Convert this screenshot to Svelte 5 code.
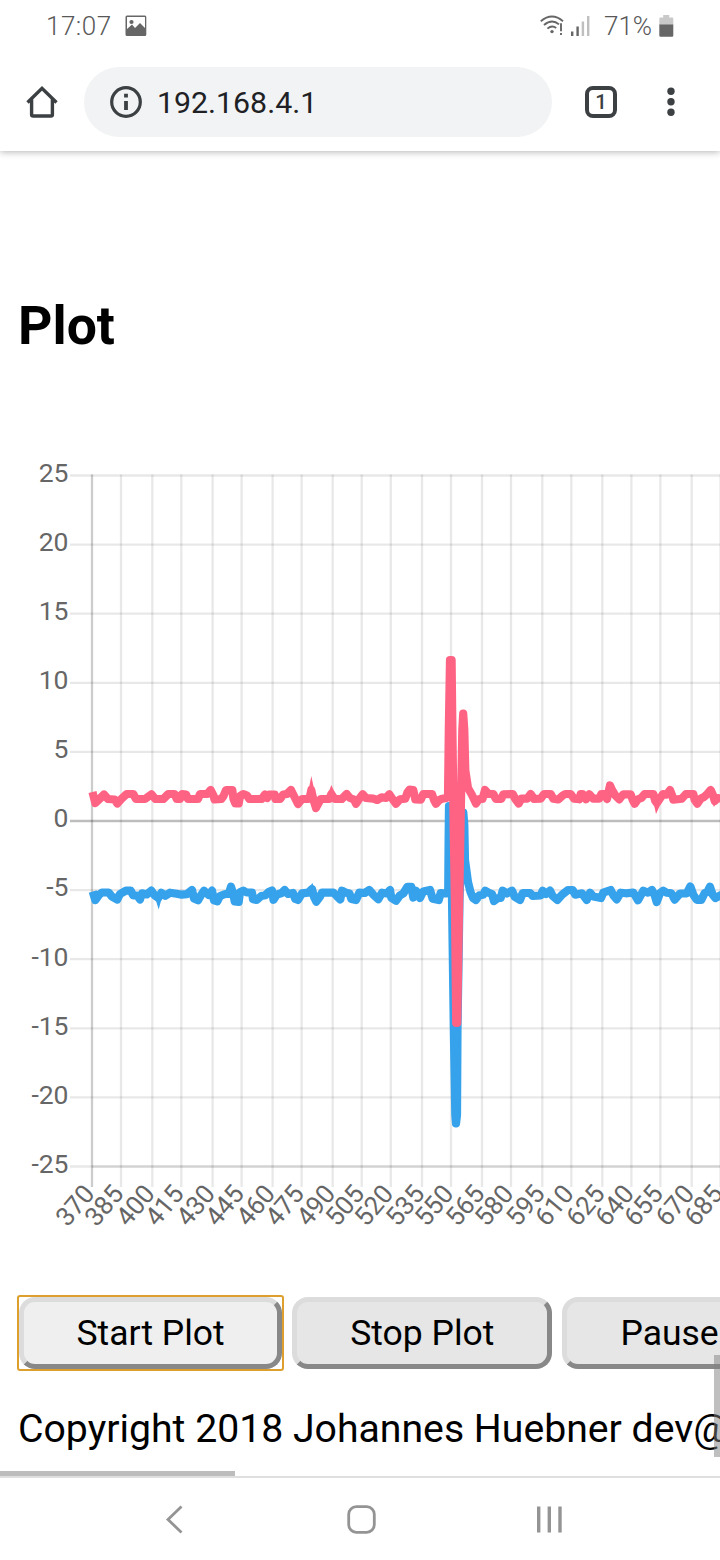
<!--
  App.svelte: phone browser showing the inverter's live plot page.
-->
<script lang="ts">
  type Tick = { label: number; pos: number };

  const yTicks: Tick[] = [25, 20, 15, 10, 5, 0, -5, -10, -15, -20, -25].map((label, i) => ({
    label,
    pos: 475.5 + i * 69.1,
  }));

  const columns = [
    92, 121, 152.3, 181.3, 212.6, 241.6, 272.6, 301.6, 332.7, 361.7, 390.8,
    422, 451, 482, 511, 542.3, 571.3, 602.3, 631.4, 660.4, 691.7, 720.5,
  ];
  const xTicks: Tick[] = columns.map((pos, i) => ({ label: 370 + i * 15, pos }));

  const redTrace = `
    92.5,792 95.3,803 99.5,799 104,794.5 108,799 114.7,799.5 117.3,803.5 121.3,799 126.7,794 133.3,794
    136,799 145,799 151.5,794.3 155.3,799 163.3,799 168.3,794 174.7,794 176.7,799 180,799 182,794
    186,794.5 188,799 198,799 200,794 207.3,794 210.7,790 213.5,795.5 214.5,799.5 221.3,799 223.5,796
    226,790 232.3,790 233.5,799 235.3,803.5 238.7,803.5 240,796 243.3,794 247,795.5 249.3,799 261.7,799
    265,794.5 267.3,798 268.7,794.5 274.7,794.5 275.5,799 280,799 283.3,794.5 287,794 291,790 294,796
    298,804 302,799 308.7,799 310,796 311.3,790 313,798 316,808 318.7,802.7 320.7,799 329.3,799
    331.3,794 334.7,799 341.7,799 346.7,794 350,798 354,799.5 356,803.7 359.3,798.7 362.7,794.3 366,798
    373.3,798.7 377.3,800 381.7,797.3 386,798 389.3,794.3 392.7,799.3 396,803.7 400,799.3 405.3,798.7
    407.3,792.7 409.5,789.7 413.3,790 415.3,799.5 420.7,799.7 423.3,794 432,794 434,800 436,803.7
    439.3,800 442,798.7 446.5,798 448,796 448.8,730 450,660 451.6,660 452.3,720 453.7,830 454.9,900
    456.2,1023 457.2,1023 459.2,900 461.2,790 462.3,730 463.2,713.5 464.3,730 465.3,770 468,788 472,795
    476,803.5 479,799 482.5,799 485,790 488.7,794 493.3,794 496,799 501.3,799 503.3,794.3 512.7,794
    515.3,799 518.7,803.5 521.3,798.7 527.3,798.7 530.7,794 534,799 540.7,798.7 544,794 550.7,794
    553.3,798.7 558.3,799.5 562.7,795.5 565.3,794 570.7,794 574,798.7 579.3,799.3 580.7,794 582.7,794
    586,799.3 589.3,794.3 593.3,798.7 599.3,798.7 601.3,794 605.3,794 607,799 609,790 610,785.5 612,790
    615.3,795.3 619.3,799.3 623.3,794.3 630.7,794.3 632.7,800 634.7,803.7 638,799.3 641.3,798
    644.7,794 653.3,794 655.3,801 656.7,803 659.3,799.5 663,794 666.7,794.7 670,790 672,795
    673.3,799.7 681.7,798.7 686,794 693.3,794 694.7,800 697.3,803.7 700.7,798.7 704,797 707.3,794
    710.7,790 713.3,796 714.7,801 717.3,798 724,799`;

  const blueTrace = `
    92.7,891.5 95.3,900 99.3,894.5 102,892.5 108.7,892.5 112,896.7 117.3,899.5 120,894 126,890.7
    130.7,890.7 133.3,895.5 137.3,895.5 140,899.5 142,893.3 146.7,894.5 151.3,890.7 154.7,895.5 158.3,898
    161.3,892.7 165.3,895.7 170,892.7 176.7,893.7 181.7,894.7 186.7,894.2 192,890 194,898.5 198,900.3
    201.3,894.7 204,890.7 208.7,895 212,890.7 214,900.3 217.3,901.3 220,896 225.3,894 228.7,894
    231,886.7 233.3,894 234.7,901.5 238.7,902 240,892.3 243.3,890.7 246.7,892.5 252,892.5 253,899.3
    256.7,900 261.3,896 265.3,895.3 268.7,892 272,890.5 273.5,899.8 276.7,894.7 281.7,893 284.7,890
    288,894 293,893 295.3,899 298,900 302,893.3 308,892.7 312,889 314,897 316.3,901.7 320,896.5
    322,892.7 333.3,892.5 336.7,896 340.3,899.5 342,890.7 346,892.7 349.5,893.5 351.3,899 356,900
    359.3,892.7 364.7,893 369.3,890 373.3,894.7 378.3,899.2 382,892.7 386.7,893.5 390,890 391.3,897.7
    396,900.7 400,895.3 403.3,893.5 407.3,886.9 411.3,886.9 413.3,897.5 416,890.7 420,898 423.3,891.5
    430,890 432.7,898.7 438.7,900 440.7,893 446,893.5 448.2,892 448.6,840 449,806 450.5,820 452,900
    453.8,1028 455.3,1115 456,1123.5 457,1115 457.5,1028 459.5,900 462,825 463.3,812.5 464.3,825
    465,860 468,882 470.5,892 473,898 476,900 479.3,895.3 483.3,894.7 485.3,890.7 489.3,893 492,894
    494,901 498,898 500.7,898 502.7,890.7 507,893.5 512,890.7 514.7,896.7 520,900 522.7,893 530,893
    532.7,896 540.7,895.5 542.7,890.7 546,894 550,890.7 552.7,896 557.3,900 562,894.7 568,890
    572.7,890 575.3,894.7 582,893.3 586.7,900 590,892.7 593.3,896.5 601,898 603.3,892.7 610.7,890
    613.3,895.3 616.7,899.3 620.7,892.7 626,893.3 633.3,892.5 638,900.3 643.3,890.7 648,892.7 652,890
    654.7,895.3 656.7,902 660,893 663.3,890.7 666.7,892.7 671.3,893.3 674.7,899.7 680,893.5 686.7,893.3
    690.3,886.5 693.3,894.7 696.7,899.8 701.3,899.8 704.7,893 707.3,892 710,886.7 712.7,894.7
    715.3,898 724,893.5`;
</script>

<div class="phone">
  <header class="chrome">
    <div class="status">
      <span class="clock">17:07</span>
      <svg class="photo" width="22" height="22" viewBox="0 0 22 22">
        <path fill-rule="evenodd" fill="#666" d="M2 .5h18q1.300 0 1.300 1.500v17.500q0 1.500-1.300 1.500H2q-1.500 0-1.500-1.500V2Q.5.5 2 .5ZM2 2v12l5-4.500 3 3.500 5-5 5 5V2Z" />
        <circle cx="6.500" cy="7" r="2.100" fill="#666" />
      </svg>
      <svg class="wifi" width="24" height="22" viewBox="0 0 24 22">
        <g fill="none" stroke="#666" stroke-width="1.900">
          <path d="M.8 6.200Q12 -3.200 23 6.200" />
          <path d="M4 10Q12 3.300 19 9.400" />
          <path d="M7.400 13.600Q12 9.700 16.200 13" />
          <path d="M21 8.300v8M21 17.900v2.200" />
        </g>
        <circle cx="12" cy="16.600" r="1.700" fill="#666" />
      </svg>
      <svg class="signal" width="19" height="22" viewBox="0 0 19 22">
        <path d="M1.200 21v-4.500M6.600 21V11.500" stroke="#666" stroke-width="2.400" />
        <path d="M11.900 21V6.500M17.200 21V1" stroke="#bfbfbf" stroke-width="2.400" />
      </svg>
      <span class="percent">71%</span>
      <svg class="battery" width="15" height="22" viewBox="0 0 15 22">
        <path d="M4.200 0h6v2.500H13q1.300 0 1.300 1.300V10H.3V3.800q0-1.300 1.300-1.300h2.600Z" fill="#c9c9c9" />
        <path d="M.3 9.500h14v11q0 1.200-1.300 1.200H1.600q-1.300 0-1.300-1.200Z" fill="#666" />
      </svg>
    </div>

    <div class="toolbar">
      <svg class="home" width="32" height="32" viewBox="0 0 32 32" fill="none" stroke="#3c4043" stroke-width="3.400">
        <path d="M1.500 16.500 16 2.400 30.500 16.500M5.600 13.500V28.500q0 1.500 1.500 1.500h17.800q1.500 0 1.500-1.500V13.500" />
      </svg>
      <div class="address">
        <svg width="32" height="32" viewBox="0 0 32 32">
          <circle cx="16" cy="16" r="14.300" fill="none" stroke="#3c4043" stroke-width="3.200" />
          <path d="M16 7.800v3.700M16 15v9" stroke="#3c4043" stroke-width="3.800" />
        </svg>
        <span class="url">192.168.4.1</span>
      </div>
      <div class="tabs">1</div>
      <svg class="menu" width="8" height="30" viewBox="0 0 8 30" fill="#3c4043">
        <circle cx="4" cy="4.200" r="3.700" />
        <circle cx="4" cy="14.700" r="3.700" />
        <circle cx="4" cy="25.200" r="3.700" />
      </svg>
    </div>
  </header>

  <main class="page">
    <h1>Plot</h1>

    <svg class="chart" width="720" height="800" viewBox="0 450 720 800">
      <g class="grid">
        {#each yTicks as tick}
          <line x1="70" x2="720" y1={tick.pos} y2={tick.pos} class:zero={tick.label === 0} />
        {/each}
        {#each xTicks as tick, i}
          <line x1={tick.pos} x2={tick.pos} y1="474.500" y2="1187" class:axis={i === 0} />
        {/each}
        <line x1="92" x2="720" y1="1166.500" y2="1166.500" />
      </g>

      <g class="trace blue">
        <polyline points={blueTrace} />
        <path d="M154.500 896 158.700 909.500 162.300 896ZM307.500 892 312.300 882.700 315.500 892Z" />
      </g>
      <g class="trace red">
        <polyline points={redTrace} />
        <path d="M307.800 794 311.300 776 315.200 794ZM328 794 331.300 785 335.500 794ZM652.500 798 656 814 662 801ZM711.500 799 713.800 807 719 800Z" />
      </g>

      <g class="labels">
        {#each yTicks as tick}
          <text x="68.500" y={tick.pos + 6.300}>{tick.label}</text>
        {/each}
        {#each xTicks as tick}
          <text class="slanted" transform="translate({tick.pos - 3} 1188.500) rotate(-50)">{tick.label}</text>
        {/each}
      </g>
    </svg>

    <div class="actions">
      <button class="focused">Start Plot</button>
      <button>Stop Plot</button>
      <button>Pause Plot</button>
    </div>

    <p class="copyright">Copyright 2018 Johannes Huebner dev@</p>

    <div class="scroll-y"></div>
    <div class="scroll-x"></div>
  </main>

  <nav class="navbar">
    <svg width="720" height="82" viewBox="0 0 720 82" fill="none" stroke="#949494" stroke-width="2.800">
      <path d="M181.500 28.500 168 41.500l13.500 13" />
      <rect x="348.700" y="28.700" width="25.600" height="25.600" rx="7.500" />
      <path d="M538.700 28.500v26M549.300 28.500v26M560 28.500v26" stroke-width="3.400" />
    </svg>
  </nav>
</div>

<style>
  :global(body) {
    margin: 0;
    background: #fff;
  }

  .phone {
    display: flex;
    flex-direction: column;
    width: 720px;
    height: 1560px;
    overflow: hidden;
    background: #fff;
    font-family: Roboto, sans-serif;
  }

  /* Status bar and browser toolbar */
  .chrome {
    height: 151px;
    flex-shrink: 0;
    box-shadow: 0 1px 7px rgba(0, 0, 0, 0.3);
    z-index: 1;
  }

  .status {
    display: flex;
    align-items: center;
    height: 52px;
    padding: 0 46px;
    box-sizing: border-box;
    color: #585858;
    font-size: 26px;
    font-weight: 300;
  }

  .clock { width: 79px; letter-spacing: 0.5px; }
  .wifi { margin-left: auto; }
  .signal { margin-left: 7px; }
  .percent { margin-left: 14px; width: 50px; }
  .battery { margin-left: 5px; }

  .toolbar {
    display: flex;
    align-items: center;
    height: 99px;
    padding-left: 26px;
  }

  .address {
    display: flex;
    align-items: center;
    gap: 15px;
    width: 468px;
    height: 70px;
    margin-left: 26px;
    padding-left: 26px;
    box-sizing: border-box;
    border-radius: 35px;
    background: #f1f3f4;
    color: #202124;
    font-size: 30.3px;
  }
  .url { padding-top: 2px; }

  .tabs {
    display: flex;
    align-items: center;
    justify-content: center;
    width: 32px;
    height: 32px;
    margin-left: 33px;
    box-sizing: border-box;
    border: 4px solid #3c4043;
    border-radius: 8px;
    color: #3c4043;
    font-size: 20.5px;
    font-weight: 500;
  }

  .menu { margin-left: 50px; }

  /* Web page */
  .page {
    position: relative;
    display: flex;
    flex-direction: column;
    height: 1325px;
    flex-shrink: 0;
    overflow: hidden;
    color: #000;
  }

  h1 {
    margin: 144px 0 0 18px;
    font-size: 53.5px;
    line-height: 62px;
    font-weight: 700;
  }

  .chart {
    display: block;
    flex-shrink: 0;
    margin-top: 93px;
  }

  .grid line {
    stroke: rgba(0, 0, 0, 0.09);
    stroke-width: 2.3px;
  }
  .grid line.zero { stroke: rgba(0, 0, 0, 0.26); }
  .grid line.axis { stroke: rgba(0, 0, 0, 0.2); }

  .trace polyline {
    fill: none;
    stroke-width: 8.2px;
    stroke-linejoin: round;
  }
  .blue polyline { stroke: #36a2eb; }
  .blue path { fill: #36a2eb; }
  .red polyline { stroke: #ff6384; }
  .red path { fill: #ff6384; }

  .labels text {
    fill: #666;
    font-size: 26.5px;
    text-anchor: end;
  }
  .labels .slanted {
    font-size: 26px;
    dominant-baseline: central;
  }

  .actions {
    display: flex;
    gap: 10px;
    margin: 47px 0 0 19px;
  }

  button {
    position: relative;
    flex-shrink: 0;
    height: 72px;
    padding: 0 53px;
    border: 5px solid;
    border-color: #dcdcdc #888 #888 #dcdcdc;
    border-radius: 16px;
    background: #e6e6e6;
    color: #000;
    font-family: inherit;
    font-size: 35.5px;
  }
  button.focused {
    padding: 0 52.5px;
    background: #efefef;
  }

  /* Square focus ring over the rounded button */
  button.focused::after {
    content: "";
    position: absolute;
    inset: -7px;
    border: 2px solid #dda02c;
    border-radius: 3px;
  }

  .copyright {
    margin: 37px 0 0 18px;
    font-size: 39.2px;
    line-height: 46px;
    white-space: nowrap;
  }

  .scroll-y {
    position: absolute;
    right: 0;
    top: 1204px;
    width: 6px;
    height: 102px;
    background: rgba(128, 128, 128, 0.5);
  }
  .scroll-x {
    position: absolute;
    left: 0;
    bottom: 0;
    width: 235px;
    height: 5px;
    background: #bdbdbd;
  }

  /* Android navigation */
  .navbar {
    height: 82px;
    border-top: 2px solid #dfdfdf;
  }
  .navbar svg { display: block; }
</style>
